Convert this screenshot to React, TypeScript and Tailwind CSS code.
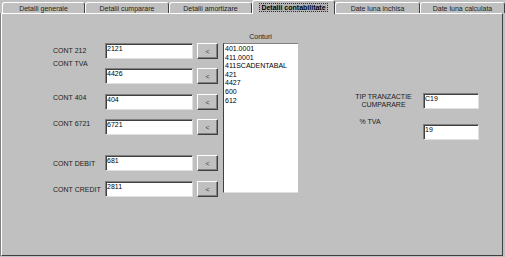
import React from 'react';

const tabs = [
  { label: 'Detalii generale', w: 'w-[83px]' },
  { label: 'Detalii cumparare', w: 'w-[84px]' },
  { label: 'Detalii amortizare', w: 'w-[83px]' },
  { label: 'Detalii contabilitate', w: 'w-[83px]', active: true },
  { label: 'Date luna inchisa', w: 'w-[85px]' },
  { label: 'Date luna calculata', w: 'w-[85px]' },
];

const rows = [
  { label: 'CONT 212', value: '2121', gap: 'mt-0', lab: 'mt-[4px]' },
  { label: 'CONT TVA', value: '4426', gap: 'mt-[9px]', lab: '-mt-[8px]' },
  { label: 'CONT 404', value: '404', gap: 'mt-[10px]', lab: 'mt-0' },
  { label: 'CONT 6721', value: '6721', gap: 'mt-[9px]', lab: 'mt-[1px]' },
  { label: 'CONT DEBIT', value: '681', gap: 'mt-[20px]', lab: 'mt-[5px]' },
  { label: 'CONT CREDIT', value: '2811', gap: 'mt-[10px]', lab: 'mt-[5px]' },
];

const conturi = ['401.0001', '411.0001', '411SCADENTABAL', '421', '4427', '600', '612'];

const sunken =
  'bg-white border border-t-[#808080] border-l-[#808080] border-b-[#e0e0e0] border-r-[#e0e0e0] shadow-[inset_1px_1px_0_#404040]';

function TextBox({ value, w }: { value: string; w: string }) {
  return (
    <div className={`${sunken} ${w} h-[16px] pl-[1px] pt-[1px] text-[7px] leading-[8px] text-black`}>
      {value}
    </div>
  );
}

function PickButton() {
  return (
    <div className="ml-[4px] w-[21px] h-[16px] flex items-center justify-center border border-t-white border-l-white border-b-[#404040] border-r-[#404040] shadow-[inset_-1px_-1px_0_#808080] text-[7px] leading-none text-[#404040]">
      &lt;
    </div>
  );
}

export default function App() {
  return (
    <div
      className="w-[505px] h-[257px] bg-[#c0c0c0] overflow-hidden text-black"
      style={{ fontFamily: '"Liberation Sans", Arial, sans-serif' }}
    >
      {/* tab strip */}
      <div className="flex h-[13px] pl-[2px]">
        {tabs.map((t) =>
          t.active ? (
            <div
              key={t.label}
              className={`${t.w} h-[14px] relative z-10 bg-[#c0c0c0] border-t border-l border-white border-r border-r-[#404040] rounded-t-[3px] flex items-center justify-center`}
            >
              <span className="px-[1px] h-[9px] bg-[#b2b2b2] border border-dotted border-[#303030] text-[7px] leading-[7px] font-bold">
                {t.label}
              </span>
            </div>
          ) : (
            <div
              key={t.label}
              className={`${t.w} h-[11px] mt-[2px] border-t border-l border-white border-r border-r-[#404040] rounded-t-[3px] flex items-center justify-center text-[7px] leading-none text-[#202020]`}
            >
              {t.label}
            </div>
          )
        )}
      </div>

      {/* panel */}
      <div className="w-[503px] h-[243px] border-l border-l-[#808080]">
        <div className="h-full border-t border-l border-white border-r border-b border-r-[#404040] border-b-[#404040] flex pt-[19px]">
          {/* account rows */}
          <div className="ml-[51px] mt-[10px] flex flex-col">
            {rows.map((r) => (
              <div key={r.label} className={`flex items-start h-[16px] ${r.gap}`}>
                <div className={`w-[52px] h-[8px] text-[7px] leading-[8px] text-[#202020] ${r.lab}`}>{r.label}</div>
                <TextBox value={r.value} w="w-[88px]" />
                <PickButton />
              </div>
            ))}
          </div>

          {/* conturi list */}
          <div className="ml-[5px] flex flex-col w-[75px]">
            <div className="h-[10px] text-center text-[7px] leading-[8px] text-[#202020]">Conturi</div>
            <div className="h-[150px] bg-white border-l border-t border-l-[#404040] border-t-[#808080] border-b border-b-[#e0e0e0] pl-[1px] pt-[1px] text-[7px] leading-[8.6px]">
              {conturi.map((c) => (
                <div key={c}>{c}</div>
              ))}
            </div>
          </div>

          {/* transaction fields */}
          <div className="ml-[47px] mt-[60px] flex flex-col">
            <div className="flex items-center h-[16px]">
              <div className="w-[77px] text-center text-[7px] leading-[8.5px] text-[#202020]">
                TIP TRANZACTIE
                <br />
                CUMPARARE
              </div>
              <div className="ml-[1px]">
                <TextBox value="C19" w="w-[56px]" />
              </div>
            </div>
            <div className="flex items-start h-[16px] mt-[15px]">
              <div className="w-[77px] -mt-[6px] pr-[27px] text-center text-[7px] leading-[8px] text-[#202020]">% TVA</div>
              <div className="ml-[1px]">
                <TextBox value="19" w="w-[56px]" />
              </div>
            </div>
          </div>
        </div>
      </div>
    </div>
  );
}
